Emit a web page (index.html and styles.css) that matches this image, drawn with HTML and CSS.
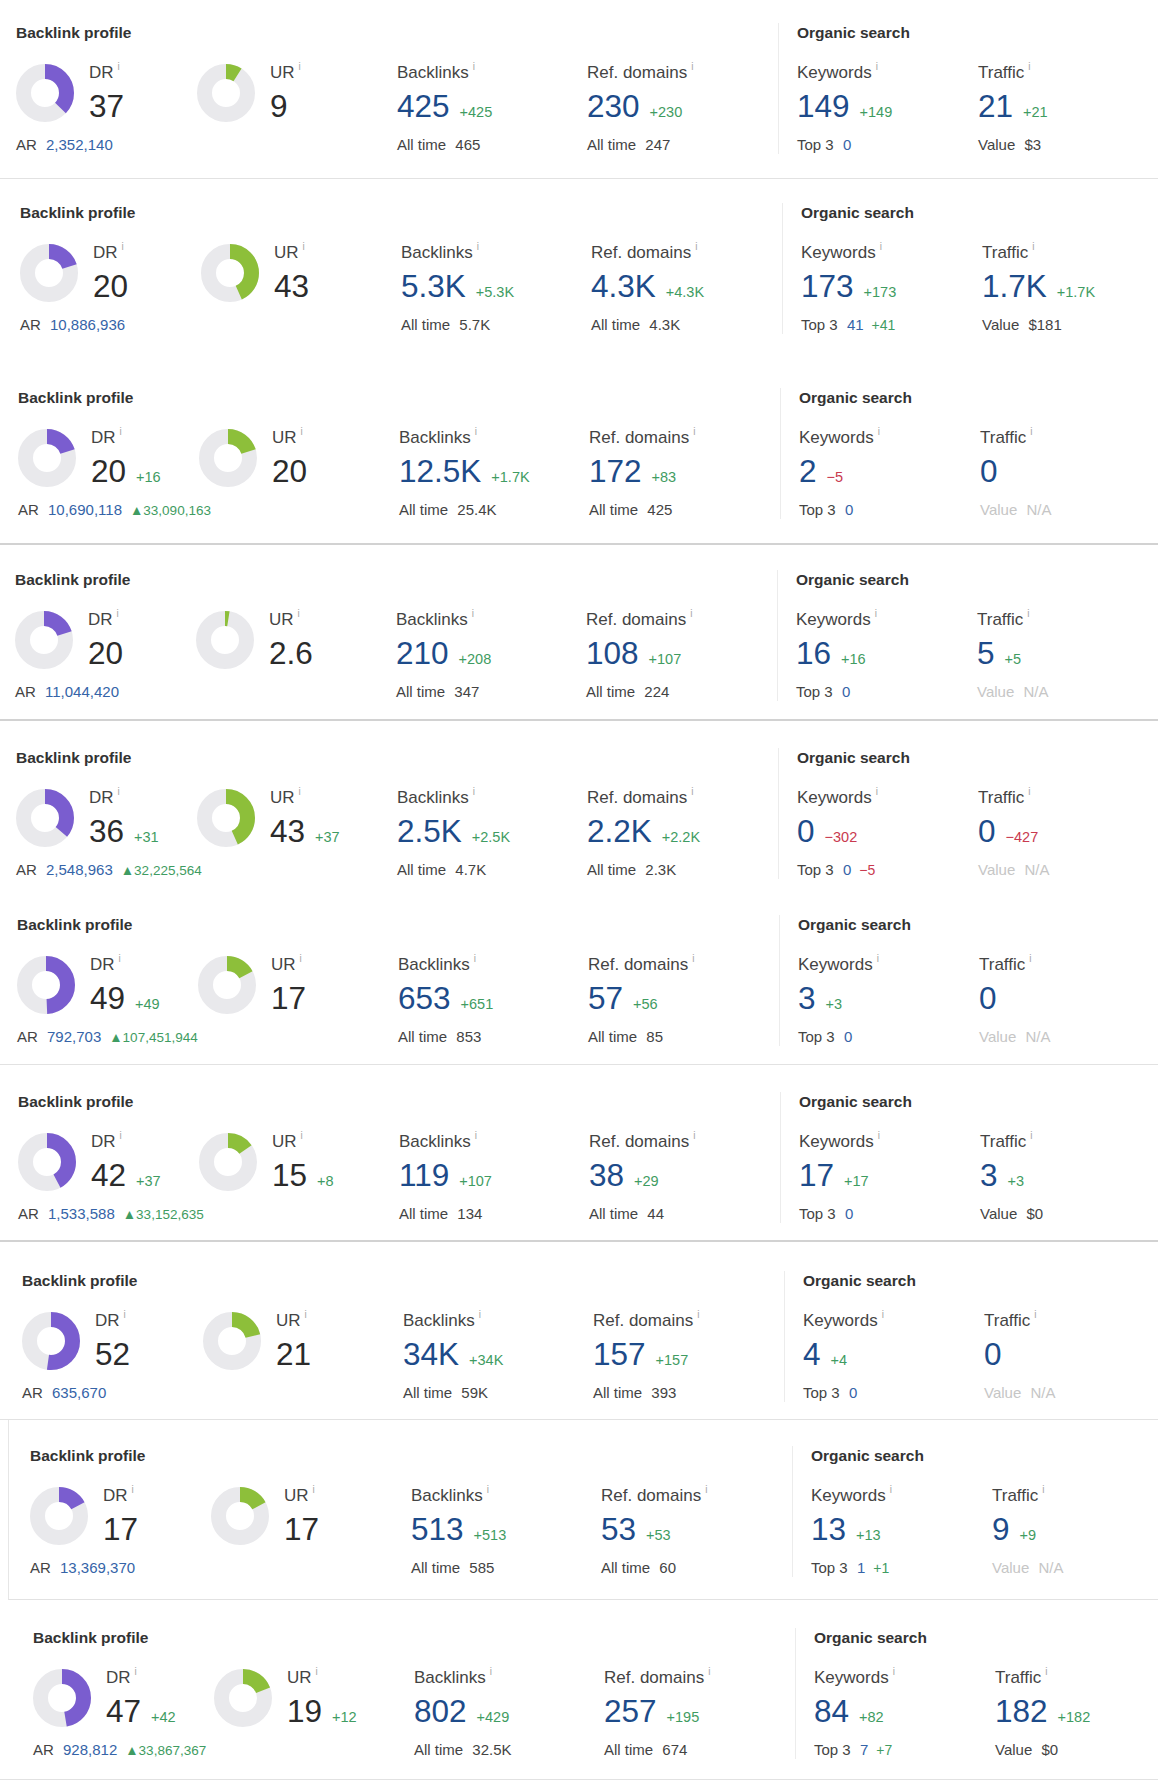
FILE: index.html
```html
<!DOCTYPE html>
<html lang="en">
<head>
<meta charset="utf-8">
<title>Backlink profiles</title>
<link rel="stylesheet" href="styles.css">
</head>
<body>
<main class="page">

<!-- Card 1 -->
<div class="card c1 line">
  <section class="group backlink">
    <h2 class="group-title">Backlink profile</h2>
    <div class="metrics">
      <div class="metric rating">
        <div class="rating-head">
          <svg class="donut" viewBox="0 0 58 58"><circle class="track" cx="29" cy="29" r="21.5"/><circle class="arc dr" cx="29" cy="29" r="21.5" stroke-dasharray="49.98 200" transform="rotate(-90 29 29)"/></svg>
          <div class="rating-text"><div class="label">DR<sup class="info">i</sup></div><div class="value"><span class="num dark">37</span></div></div>
        </div>
        <div class="sub">AR <span class="link">2,352,140</span></div>
      </div>
      <div class="metric rating">
        <div class="rating-head">
          <svg class="donut" viewBox="0 0 58 58"><circle class="track" cx="29" cy="29" r="21.5"/><circle class="arc ur" cx="29" cy="29" r="21.5" stroke-dasharray="12.16 200" transform="rotate(-90 29 29)"/></svg>
          <div class="rating-text"><div class="label">UR<sup class="info">i</sup></div><div class="value"><span class="num dark">9</span></div></div>
        </div>
      </div>
      <div class="metric">
        <div class="label">Backlinks<sup class="info">i</sup></div>
        <div class="value"><span class="num">425</span><span class="delta up">+425</span></div>
        <div class="sub">All time <span class="subval">465</span></div>
      </div>
      <div class="metric">
        <div class="label">Ref. domains<sup class="info">i</sup></div>
        <div class="value"><span class="num">230</span><span class="delta up">+230</span></div>
        <div class="sub">All time <span class="subval">247</span></div>
      </div>
    </div>
  </section>
  <section class="group organic">
    <h2 class="group-title">Organic search</h2>
    <div class="metrics">
      <div class="metric">
        <div class="label">Keywords<sup class="info">i</sup></div>
        <div class="value"><span class="num">149</span><span class="delta up">+149</span></div>
        <div class="sub">Top 3 <span class="link">0</span></div>
      </div>
      <div class="metric">
        <div class="label">Traffic<sup class="info">i</sup></div>
        <div class="value"><span class="num">21</span><span class="delta up">+21</span></div>
        <div class="sub">Value <span class="subval">$3</span></div>
      </div>
    </div>
  </section>
</div>

<!-- Card 2 -->
<div class="card c2">
  <section class="group backlink">
    <h2 class="group-title">Backlink profile</h2>
    <div class="metrics">
      <div class="metric rating">
        <div class="rating-head">
          <svg class="donut" viewBox="0 0 58 58"><circle class="track" cx="29" cy="29" r="21.5"/><circle class="arc dr" cx="29" cy="29" r="21.5" stroke-dasharray="27.02 200" transform="rotate(-90 29 29)"/></svg>
          <div class="rating-text"><div class="label">DR<sup class="info">i</sup></div><div class="value"><span class="num dark">20</span></div></div>
        </div>
        <div class="sub">AR <span class="link">10,886,936</span></div>
      </div>
      <div class="metric rating">
        <div class="rating-head">
          <svg class="donut" viewBox="0 0 58 58"><circle class="track" cx="29" cy="29" r="21.5"/><circle class="arc ur" cx="29" cy="29" r="21.5" stroke-dasharray="58.09 200" transform="rotate(-90 29 29)"/></svg>
          <div class="rating-text"><div class="label">UR<sup class="info">i</sup></div><div class="value"><span class="num dark">43</span></div></div>
        </div>
      </div>
      <div class="metric">
        <div class="label">Backlinks<sup class="info">i</sup></div>
        <div class="value"><span class="num">5.3K</span><span class="delta up">+5.3K</span></div>
        <div class="sub">All time <span class="subval">5.7K</span></div>
      </div>
      <div class="metric">
        <div class="label">Ref. domains<sup class="info">i</sup></div>
        <div class="value"><span class="num">4.3K</span><span class="delta up">+4.3K</span></div>
        <div class="sub">All time <span class="subval">4.3K</span></div>
      </div>
    </div>
  </section>
  <section class="group organic">
    <h2 class="group-title">Organic search</h2>
    <div class="metrics">
      <div class="metric">
        <div class="label">Keywords<sup class="info">i</sup></div>
        <div class="value"><span class="num">173</span><span class="delta up">+173</span></div>
        <div class="sub">Top 3 <span class="link">41</span><span class="sub-delta up">+41</span></div>
      </div>
      <div class="metric">
        <div class="label">Traffic<sup class="info">i</sup></div>
        <div class="value"><span class="num">1.7K</span><span class="delta up">+1.7K</span></div>
        <div class="sub">Value <span class="subval">$181</span></div>
      </div>
    </div>
  </section>
</div>

<!-- Card 3 -->
<div class="card c3 line-strong">
  <section class="group backlink">
    <h2 class="group-title">Backlink profile</h2>
    <div class="metrics">
      <div class="metric rating">
        <div class="rating-head">
          <svg class="donut" viewBox="0 0 58 58"><circle class="track" cx="29" cy="29" r="21.5"/><circle class="arc dr" cx="29" cy="29" r="21.5" stroke-dasharray="27.02 200" transform="rotate(-90 29 29)"/></svg>
          <div class="rating-text"><div class="label">DR<sup class="info">i</sup></div><div class="value"><span class="num dark">20</span><span class="delta up">+16</span></div></div>
        </div>
        <div class="sub">AR <span class="link">10,690,118</span><span class="rank-up">&#9650;33,090,163</span></div>
      </div>
      <div class="metric rating">
        <div class="rating-head">
          <svg class="donut" viewBox="0 0 58 58"><circle class="track" cx="29" cy="29" r="21.5"/><circle class="arc ur" cx="29" cy="29" r="21.5" stroke-dasharray="27.02 200" transform="rotate(-90 29 29)"/></svg>
          <div class="rating-text"><div class="label">UR<sup class="info">i</sup></div><div class="value"><span class="num dark">20</span></div></div>
        </div>
      </div>
      <div class="metric">
        <div class="label">Backlinks<sup class="info">i</sup></div>
        <div class="value"><span class="num">12.5K</span><span class="delta up">+1.7K</span></div>
        <div class="sub">All time <span class="subval">25.4K</span></div>
      </div>
      <div class="metric">
        <div class="label">Ref. domains<sup class="info">i</sup></div>
        <div class="value"><span class="num">172</span><span class="delta up">+83</span></div>
        <div class="sub">All time <span class="subval">425</span></div>
      </div>
    </div>
  </section>
  <section class="group organic">
    <h2 class="group-title">Organic search</h2>
    <div class="metrics">
      <div class="metric">
        <div class="label">Keywords<sup class="info">i</sup></div>
        <div class="value"><span class="num">2</span><span class="delta down">&minus;5</span></div>
        <div class="sub">Top 3 <span class="link">0</span></div>
      </div>
      <div class="metric">
        <div class="label">Traffic<sup class="info">i</sup></div>
        <div class="value"><span class="num">0</span></div>
        <div class="sub na">Value <span class="subval">N/A</span></div>
      </div>
    </div>
  </section>
</div>

<!-- Card 4 -->
<div class="card c4 line-strong">
  <section class="group backlink">
    <h2 class="group-title">Backlink profile</h2>
    <div class="metrics">
      <div class="metric rating">
        <div class="rating-head">
          <svg class="donut" viewBox="0 0 58 58"><circle class="track" cx="29" cy="29" r="21.5"/><circle class="arc dr" cx="29" cy="29" r="21.5" stroke-dasharray="27.02 200" transform="rotate(-90 29 29)"/></svg>
          <div class="rating-text"><div class="label">DR<sup class="info">i</sup></div><div class="value"><span class="num dark">20</span></div></div>
        </div>
        <div class="sub">AR <span class="link">11,044,420</span></div>
      </div>
      <div class="metric rating">
        <div class="rating-head">
          <svg class="donut" viewBox="0 0 58 58"><circle class="track" cx="29" cy="29" r="21.5"/><circle class="arc ur" cx="29" cy="29" r="21.5" stroke-dasharray="3.51 200" transform="rotate(-90 29 29)"/></svg>
          <div class="rating-text"><div class="label">UR<sup class="info">i</sup></div><div class="value"><span class="num dark">2.6</span></div></div>
        </div>
      </div>
      <div class="metric">
        <div class="label">Backlinks<sup class="info">i</sup></div>
        <div class="value"><span class="num">210</span><span class="delta up">+208</span></div>
        <div class="sub">All time <span class="subval">347</span></div>
      </div>
      <div class="metric">
        <div class="label">Ref. domains<sup class="info">i</sup></div>
        <div class="value"><span class="num">108</span><span class="delta up">+107</span></div>
        <div class="sub">All time <span class="subval">224</span></div>
      </div>
    </div>
  </section>
  <section class="group organic">
    <h2 class="group-title">Organic search</h2>
    <div class="metrics">
      <div class="metric">
        <div class="label">Keywords<sup class="info">i</sup></div>
        <div class="value"><span class="num">16</span><span class="delta up">+16</span></div>
        <div class="sub">Top 3 <span class="link">0</span></div>
      </div>
      <div class="metric">
        <div class="label">Traffic<sup class="info">i</sup></div>
        <div class="value"><span class="num">5</span><span class="delta up">+5</span></div>
        <div class="sub na">Value <span class="subval">N/A</span></div>
      </div>
    </div>
  </section>
</div>

<!-- Card 5 -->
<div class="card c5">
  <section class="group backlink">
    <h2 class="group-title">Backlink profile</h2>
    <div class="metrics">
      <div class="metric rating">
        <div class="rating-head">
          <svg class="donut" viewBox="0 0 58 58"><circle class="track" cx="29" cy="29" r="21.5"/><circle class="arc dr" cx="29" cy="29" r="21.5" stroke-dasharray="48.63 200" transform="rotate(-90 29 29)"/></svg>
          <div class="rating-text"><div class="label">DR<sup class="info">i</sup></div><div class="value"><span class="num dark">36</span><span class="delta up">+31</span></div></div>
        </div>
        <div class="sub">AR <span class="link">2,548,963</span><span class="rank-up">&#9650;32,225,564</span></div>
      </div>
      <div class="metric rating">
        <div class="rating-head">
          <svg class="donut" viewBox="0 0 58 58"><circle class="track" cx="29" cy="29" r="21.5"/><circle class="arc ur" cx="29" cy="29" r="21.5" stroke-dasharray="58.09 200" transform="rotate(-90 29 29)"/></svg>
          <div class="rating-text"><div class="label">UR<sup class="info">i</sup></div><div class="value"><span class="num dark">43</span><span class="delta up">+37</span></div></div>
        </div>
      </div>
      <div class="metric">
        <div class="label">Backlinks<sup class="info">i</sup></div>
        <div class="value"><span class="num">2.5K</span><span class="delta up">+2.5K</span></div>
        <div class="sub">All time <span class="subval">4.7K</span></div>
      </div>
      <div class="metric">
        <div class="label">Ref. domains<sup class="info">i</sup></div>
        <div class="value"><span class="num">2.2K</span><span class="delta up">+2.2K</span></div>
        <div class="sub">All time <span class="subval">2.3K</span></div>
      </div>
    </div>
  </section>
  <section class="group organic">
    <h2 class="group-title">Organic search</h2>
    <div class="metrics">
      <div class="metric">
        <div class="label">Keywords<sup class="info">i</sup></div>
        <div class="value"><span class="num">0</span><span class="delta down">&minus;302</span></div>
        <div class="sub">Top 3 <span class="link">0</span><span class="sub-delta down">&minus;5</span></div>
      </div>
      <div class="metric">
        <div class="label">Traffic<sup class="info">i</sup></div>
        <div class="value"><span class="num">0</span><span class="delta down">&minus;427</span></div>
        <div class="sub na">Value <span class="subval">N/A</span></div>
      </div>
    </div>
  </section>
</div>

<!-- Card 6 -->
<div class="card c6 line">
  <section class="group backlink">
    <h2 class="group-title">Backlink profile</h2>
    <div class="metrics">
      <div class="metric rating">
        <div class="rating-head">
          <svg class="donut" viewBox="0 0 58 58"><circle class="track" cx="29" cy="29" r="21.5"/><circle class="arc dr" cx="29" cy="29" r="21.5" stroke-dasharray="66.19 200" transform="rotate(-90 29 29)"/></svg>
          <div class="rating-text"><div class="label">DR<sup class="info">i</sup></div><div class="value"><span class="num dark">49</span><span class="delta up">+49</span></div></div>
        </div>
        <div class="sub">AR <span class="link">792,703</span><span class="rank-up">&#9650;107,451,944</span></div>
      </div>
      <div class="metric rating">
        <div class="rating-head">
          <svg class="donut" viewBox="0 0 58 58"><circle class="track" cx="29" cy="29" r="21.5"/><circle class="arc ur" cx="29" cy="29" r="21.5" stroke-dasharray="22.97 200" transform="rotate(-90 29 29)"/></svg>
          <div class="rating-text"><div class="label">UR<sup class="info">i</sup></div><div class="value"><span class="num dark">17</span></div></div>
        </div>
      </div>
      <div class="metric">
        <div class="label">Backlinks<sup class="info">i</sup></div>
        <div class="value"><span class="num">653</span><span class="delta up">+651</span></div>
        <div class="sub">All time <span class="subval">853</span></div>
      </div>
      <div class="metric">
        <div class="label">Ref. domains<sup class="info">i</sup></div>
        <div class="value"><span class="num">57</span><span class="delta up">+56</span></div>
        <div class="sub">All time <span class="subval">85</span></div>
      </div>
    </div>
  </section>
  <section class="group organic">
    <h2 class="group-title">Organic search</h2>
    <div class="metrics">
      <div class="metric">
        <div class="label">Keywords<sup class="info">i</sup></div>
        <div class="value"><span class="num">3</span><span class="delta up">+3</span></div>
        <div class="sub">Top 3 <span class="link">0</span></div>
      </div>
      <div class="metric">
        <div class="label">Traffic<sup class="info">i</sup></div>
        <div class="value"><span class="num">0</span></div>
        <div class="sub na">Value <span class="subval">N/A</span></div>
      </div>
    </div>
  </section>
</div>

<!-- Card 7 -->
<div class="card c7 line-strong">
  <section class="group backlink">
    <h2 class="group-title">Backlink profile</h2>
    <div class="metrics">
      <div class="metric rating">
        <div class="rating-head">
          <svg class="donut" viewBox="0 0 58 58"><circle class="track" cx="29" cy="29" r="21.5"/><circle class="arc dr" cx="29" cy="29" r="21.5" stroke-dasharray="56.74 200" transform="rotate(-90 29 29)"/></svg>
          <div class="rating-text"><div class="label">DR<sup class="info">i</sup></div><div class="value"><span class="num dark">42</span><span class="delta up">+37</span></div></div>
        </div>
        <div class="sub">AR <span class="link">1,533,588</span><span class="rank-up">&#9650;33,152,635</span></div>
      </div>
      <div class="metric rating">
        <div class="rating-head">
          <svg class="donut" viewBox="0 0 58 58"><circle class="track" cx="29" cy="29" r="21.5"/><circle class="arc ur" cx="29" cy="29" r="21.5" stroke-dasharray="20.26 200" transform="rotate(-90 29 29)"/></svg>
          <div class="rating-text"><div class="label">UR<sup class="info">i</sup></div><div class="value"><span class="num dark">15</span><span class="delta up">+8</span></div></div>
        </div>
      </div>
      <div class="metric">
        <div class="label">Backlinks<sup class="info">i</sup></div>
        <div class="value"><span class="num">119</span><span class="delta up">+107</span></div>
        <div class="sub">All time <span class="subval">134</span></div>
      </div>
      <div class="metric">
        <div class="label">Ref. domains<sup class="info">i</sup></div>
        <div class="value"><span class="num">38</span><span class="delta up">+29</span></div>
        <div class="sub">All time <span class="subval">44</span></div>
      </div>
    </div>
  </section>
  <section class="group organic">
    <h2 class="group-title">Organic search</h2>
    <div class="metrics">
      <div class="metric">
        <div class="label">Keywords<sup class="info">i</sup></div>
        <div class="value"><span class="num">17</span><span class="delta up">+17</span></div>
        <div class="sub">Top 3 <span class="link">0</span></div>
      </div>
      <div class="metric">
        <div class="label">Traffic<sup class="info">i</sup></div>
        <div class="value"><span class="num">3</span><span class="delta up">+3</span></div>
        <div class="sub">Value <span class="subval">$0</span></div>
      </div>
    </div>
  </section>
</div>

<!-- Card 8 -->
<div class="card c8 line">
  <section class="group backlink">
    <h2 class="group-title">Backlink profile</h2>
    <div class="metrics">
      <div class="metric rating">
        <div class="rating-head">
          <svg class="donut" viewBox="0 0 58 58"><circle class="track" cx="29" cy="29" r="21.5"/><circle class="arc dr" cx="29" cy="29" r="21.5" stroke-dasharray="70.25 200" transform="rotate(-90 29 29)"/></svg>
          <div class="rating-text"><div class="label">DR<sup class="info">i</sup></div><div class="value"><span class="num dark">52</span></div></div>
        </div>
        <div class="sub">AR <span class="link">635,670</span></div>
      </div>
      <div class="metric rating">
        <div class="rating-head">
          <svg class="donut" viewBox="0 0 58 58"><circle class="track" cx="29" cy="29" r="21.5"/><circle class="arc ur" cx="29" cy="29" r="21.5" stroke-dasharray="28.37 200" transform="rotate(-90 29 29)"/></svg>
          <div class="rating-text"><div class="label">UR<sup class="info">i</sup></div><div class="value"><span class="num dark">21</span></div></div>
        </div>
      </div>
      <div class="metric">
        <div class="label">Backlinks<sup class="info">i</sup></div>
        <div class="value"><span class="num">34K</span><span class="delta up">+34K</span></div>
        <div class="sub">All time <span class="subval">59K</span></div>
      </div>
      <div class="metric">
        <div class="label">Ref. domains<sup class="info">i</sup></div>
        <div class="value"><span class="num">157</span><span class="delta up">+157</span></div>
        <div class="sub">All time <span class="subval">393</span></div>
      </div>
    </div>
  </section>
  <section class="group organic">
    <h2 class="group-title">Organic search</h2>
    <div class="metrics">
      <div class="metric">
        <div class="label">Keywords<sup class="info">i</sup></div>
        <div class="value"><span class="num">4</span><span class="delta up">+4</span></div>
        <div class="sub">Top 3 <span class="link">0</span></div>
      </div>
      <div class="metric">
        <div class="label">Traffic<sup class="info">i</sup></div>
        <div class="value"><span class="num">0</span></div>
        <div class="sub na">Value <span class="subval">N/A</span></div>
      </div>
    </div>
  </section>
</div>

<!-- Card 9 -->
<div class="card c9 line">
  <section class="group backlink">
    <h2 class="group-title">Backlink profile</h2>
    <div class="metrics">
      <div class="metric rating">
        <div class="rating-head">
          <svg class="donut" viewBox="0 0 58 58"><circle class="track" cx="29" cy="29" r="21.5"/><circle class="arc dr" cx="29" cy="29" r="21.5" stroke-dasharray="22.97 200" transform="rotate(-90 29 29)"/></svg>
          <div class="rating-text"><div class="label">DR<sup class="info">i</sup></div><div class="value"><span class="num dark">17</span></div></div>
        </div>
        <div class="sub">AR <span class="link">13,369,370</span></div>
      </div>
      <div class="metric rating">
        <div class="rating-head">
          <svg class="donut" viewBox="0 0 58 58"><circle class="track" cx="29" cy="29" r="21.5"/><circle class="arc ur" cx="29" cy="29" r="21.5" stroke-dasharray="22.97 200" transform="rotate(-90 29 29)"/></svg>
          <div class="rating-text"><div class="label">UR<sup class="info">i</sup></div><div class="value"><span class="num dark">17</span></div></div>
        </div>
      </div>
      <div class="metric">
        <div class="label">Backlinks<sup class="info">i</sup></div>
        <div class="value"><span class="num">513</span><span class="delta up">+513</span></div>
        <div class="sub">All time <span class="subval">585</span></div>
      </div>
      <div class="metric">
        <div class="label">Ref. domains<sup class="info">i</sup></div>
        <div class="value"><span class="num">53</span><span class="delta up">+53</span></div>
        <div class="sub">All time <span class="subval">60</span></div>
      </div>
    </div>
  </section>
  <section class="group organic">
    <h2 class="group-title">Organic search</h2>
    <div class="metrics">
      <div class="metric">
        <div class="label">Keywords<sup class="info">i</sup></div>
        <div class="value"><span class="num">13</span><span class="delta up">+13</span></div>
        <div class="sub">Top 3 <span class="link">1</span><span class="sub-delta up">+1</span></div>
      </div>
      <div class="metric">
        <div class="label">Traffic<sup class="info">i</sup></div>
        <div class="value"><span class="num">9</span><span class="delta up">+9</span></div>
        <div class="sub na">Value <span class="subval">N/A</span></div>
      </div>
    </div>
  </section>
</div>

<!-- Card 10 -->
<div class="card c10 line">
  <section class="group backlink">
    <h2 class="group-title">Backlink profile</h2>
    <div class="metrics">
      <div class="metric rating">
        <div class="rating-head">
          <svg class="donut" viewBox="0 0 58 58"><circle class="track" cx="29" cy="29" r="21.5"/><circle class="arc dr" cx="29" cy="29" r="21.5" stroke-dasharray="63.49 200" transform="rotate(-90 29 29)"/></svg>
          <div class="rating-text"><div class="label">DR<sup class="info">i</sup></div><div class="value"><span class="num dark">47</span><span class="delta up">+42</span></div></div>
        </div>
        <div class="sub">AR <span class="link">928,812</span><span class="rank-up">&#9650;33,867,367</span></div>
      </div>
      <div class="metric rating">
        <div class="rating-head">
          <svg class="donut" viewBox="0 0 58 58"><circle class="track" cx="29" cy="29" r="21.5"/><circle class="arc ur" cx="29" cy="29" r="21.5" stroke-dasharray="25.67 200" transform="rotate(-90 29 29)"/></svg>
          <div class="rating-text"><div class="label">UR<sup class="info">i</sup></div><div class="value"><span class="num dark">19</span><span class="delta up">+12</span></div></div>
        </div>
      </div>
      <div class="metric">
        <div class="label">Backlinks<sup class="info">i</sup></div>
        <div class="value"><span class="num">802</span><span class="delta up">+429</span></div>
        <div class="sub">All time <span class="subval">32.5K</span></div>
      </div>
      <div class="metric">
        <div class="label">Ref. domains<sup class="info">i</sup></div>
        <div class="value"><span class="num">257</span><span class="delta up">+195</span></div>
        <div class="sub">All time <span class="subval">674</span></div>
      </div>
    </div>
  </section>
  <section class="group organic">
    <h2 class="group-title">Organic search</h2>
    <div class="metrics">
      <div class="metric">
        <div class="label">Keywords<sup class="info">i</sup></div>
        <div class="value"><span class="num">84</span><span class="delta up">+82</span></div>
        <div class="sub">Top 3 <span class="link">7</span><span class="sub-delta up">+7</span></div>
      </div>
      <div class="metric">
        <div class="label">Traffic<sup class="info">i</sup></div>
        <div class="value"><span class="num">182</span><span class="delta up">+182</span></div>
        <div class="sub">Value <span class="subval">$0</span></div>
      </div>
    </div>
  </section>
</div>

</main>
</body>
</html>
```

FILE: styles.css
```css
html, body {
  margin: 0;
  padding: 0;
  background: #ffffff;
}

body {
  font-family: "Liberation Sans", Arial, "Helvetica Neue", sans-serif;
  color: #444444;
}

.page {
  width: 1158px;
}

/* ---------- card rows ---------- */
.card {
  display: flex;
  align-items: flex-start;
  box-sizing: border-box;
  width: 1158px;
}

.card.line {
  border-bottom: 1px solid #e2e2e2;
}

.card.line-strong {
  border-bottom: 2px solid #d2d2d2;
}

.c1  { height: 179px; padding: 23px 0 0 16px; }
.c2  { height: 185px; padding: 24px 0 0 20px; }
.c3  { height: 181px; padding: 24px 0 0 18px; }
.c4  { height: 176px; padding: 25px 0 0 15px; }
.c5  { height: 167px; padding: 27px 0 0 16px; }
.c6  { height: 177px; padding: 27px 0 0 17px; }
.c7  { height: 177px; padding: 27px 0 0 18px; }
.c8  { height: 178px; padding: 29px 0 0 22px; }
.c9  {
  height: 180px;
  padding: 26px 0 0 21px;
  margin-left: 8px;
  width: 1150px;
  border-left: 1px solid #e6e6e6;
}
.c10 { height: 180px; padding: 28px 0 0 33px; }

/* ---------- groups ---------- */
.group-title {
  margin: 0 0 20px;
  font-size: 15.5px;
  line-height: 20px;
  font-weight: 700;
  color: #333333;
}

.backlink {
  flex: none;
  width: 762px;
}

.organic {
  flex: none;
  border-left: 1px solid #ececec;
  padding-left: 18px;
}

.metrics {
  display: grid;
  align-items: start;
}

.backlink .metrics {
  grid-template-columns: 181px 200px 190px 191px;
}

.organic .metrics {
  grid-template-columns: 181px 180px;
}

/* ---------- metric ---------- */
.label {
  font-size: 17px;
  line-height: 20px;
  color: #444444;
  white-space: nowrap;
}

.info {
  font-size: 10px;
  line-height: 0;
  color: #a8a8a8;
  vertical-align: 8px;
  margin-left: 4px;
}

.value {
  margin-top: 6px;
  height: 34px;
  line-height: 34px;
  white-space: nowrap;
}

.num {
  font-size: 31.5px;
  color: #1d4b8a;
}

.num.dark {
  color: #2b2b2b;
}

.delta {
  font-size: 14.5px;
  margin-left: 10px;
}

.up { color: #3f9c62; }
.down { color: #c93a4f; }

.sub {
  margin-top: 13px;
  font-size: 15px;
  line-height: 18px;
  color: #444444;
  white-space: nowrap;
}

.sub .link,
.sub .subval {
  margin-left: 5px;
}

.link {
  color: #3564a8;
}

.sub-delta {
  margin-left: 8px;
  font-size: 14px;
}

.rank-up {
  margin-left: 8px;
  font-size: 13.5px;
  color: #3f9c62;
}

.sub.na,
.sub.na .subval {
  color: #c6c6c6;
}

/* ---------- DR / UR ratings ---------- */
.rating-head {
  display: flex;
  align-items: center;
  gap: 15px;
}

.donut {
  flex: none;
  width: 58px;
  height: 58px;
  display: block;
}

.donut circle {
  fill: none;
  stroke-width: 15;
}

.donut .track { stroke: #e9e9ec; }
.donut .arc.dr { stroke: #7a5dcf; }
.donut .arc.ur { stroke: #8dbf3a; }
```
